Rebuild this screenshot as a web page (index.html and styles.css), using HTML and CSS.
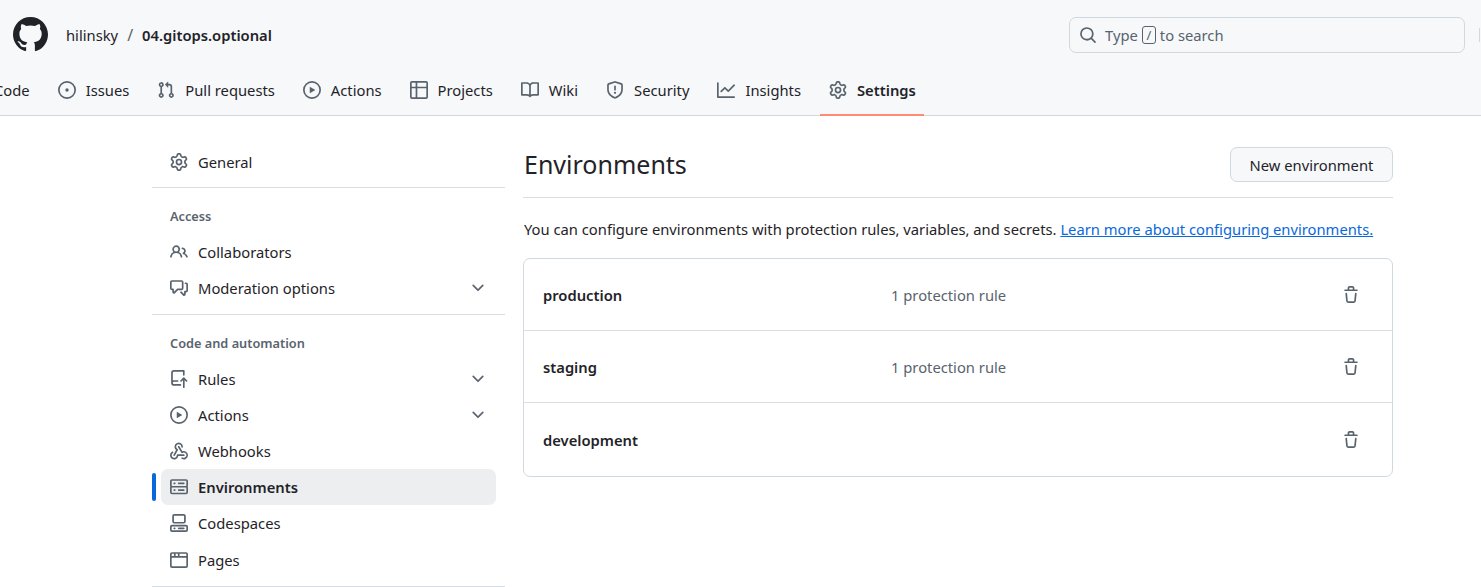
FILE: index.html
```html
<!DOCTYPE html>
<html lang="en">
<head>
  <meta charset="UTF-8">
  <meta name="viewport" content="width=device-width, initial-scale=1.0">
  <title>Environments</title>
  <link rel="stylesheet" href="styles.css">
</head>
<body>
  <svg class="sprite" aria-hidden="true">
    <symbol id="i-github" viewBox="0 0 16 16"><path d="M8 0c4.42 0 8 3.58 8 8a8.013 8.013 0 0 1-5.45 7.59c-.4.08-.55-.17-.55-.38 0-.27.01-1.13.01-2.2 0-.75-.25-1.23-.54-1.48 1.78-.2 3.65-.88 3.65-3.95 0-.88-.31-1.59-.82-2.15.08-.2.36-1.02-.08-2.12 0 0-.67-.22-2.2.82-.64-.18-1.32-.27-2-.27-.68 0-1.36.09-2 .27-1.53-1.03-2.2-.82-2.2-.82-.44 1.1-.16 1.92-.08 2.12-.51.56-.82 1.28-.82 2.15 0 3.06 1.86 3.75 3.64 3.95-.23.2-.44.55-.51 1.07-.46.21-1.61.55-2.33-.66-.15-.24-.6-.83-1.23-.82-.67.01-.27.38.01.53.34.19.73.9.82 1.13.16.45.68 1.31 2.69.94 0 .67.01 1.3.01 1.49 0 .21-.15.45-.55.38A7.995 7.995 0 0 1 0 8c0-4.42 3.58-8 8-8Z"/></symbol>
    <symbol id="i-issue" viewBox="0 0 16 16"><path d="M8 9.5a1.5 1.5 0 1 0 0-3 1.5 1.5 0 0 0 0 3Z"/><path d="M8 0a8 8 0 1 1 0 16A8 8 0 0 1 8 0ZM1.5 8a6.5 6.5 0 1 0 13 0 6.5 6.5 0 0 0-13 0Z"/></symbol>
    <symbol id="i-pull" viewBox="0 0 16 16"><path d="M1.5 3.25a2.25 2.25 0 1 1 3 2.122v5.256a2.251 2.251 0 1 1-1.5 0V5.372A2.25 2.25 0 0 1 1.5 3.25Zm5.677-.177L9.573.677A.25.25 0 0 1 10 .854V2.5h1A2.5 2.5 0 0 1 13.5 5v5.628a2.251 2.251 0 1 1-1.5 0V5a1 1 0 0 0-1-1h-1v1.646a.25.25 0 0 1-.427.177L7.177 3.427a.25.25 0 0 1 0-.354ZM3.75 2.5a.75.75 0 1 0 0 1.5.75.75 0 0 0 0-1.5Zm0 9.5a.75.75 0 1 0 0 1.5.75.75 0 0 0 0-1.5Zm8.25.75a.75.75 0 1 0 1.5 0 .75.75 0 0 0-1.5 0Z"/></symbol>
    <symbol id="i-play" viewBox="0 0 16 16"><path d="M8 0a8 8 0 1 1 0 16A8 8 0 0 1 8 0ZM1.5 8a6.5 6.5 0 1 0 13 0 6.5 6.5 0 0 0-13 0Zm4.879-2.773 4.264 2.559a.25.25 0 0 1 0 .428l-4.264 2.559A.25.25 0 0 1 6 10.559V5.442a.25.25 0 0 1 .379-.215Z"/></symbol>
    <symbol id="i-table" viewBox="0 0 16 16"><path d="M0 1.75C0 .784.784 0 1.75 0h12.5C15.216 0 16 .784 16 1.75v12.5A1.75 1.75 0 0 1 14.25 16H1.75A1.75 1.75 0 0 1 0 14.25ZM6.5 6.5v8h7.75a.25.25 0 0 0 .25-.25V6.5Zm8-1.5V1.75a.25.25 0 0 0-.25-.25H6.5V5Zm-13 1.5v7.75c0 .138.112.25.25.25H5v-8ZM5 5V1.5H1.75a.25.25 0 0 0-.25.25V5Z"/></symbol>
    <symbol id="i-book" viewBox="0 0 16 16"><path d="M0 1.75A.75.75 0 0 1 .75 1h4.253c1.227 0 2.317.59 3 1.501A3.743 3.743 0 0 1 11.006 1h4.245a.75.75 0 0 1 .75.75v10.5a.75.75 0 0 1-.75.75h-4.507a2.25 2.25 0 0 0-1.591.659l-.622.621a.75.75 0 0 1-1.06 0l-.622-.621A2.25 2.25 0 0 0 5.258 13H.75a.75.75 0 0 1-.75-.75Zm7.251 10.324.004-5.073-.002-2.253A2.25 2.25 0 0 0 5.003 2.5H1.5v9h3.757a3.75 3.75 0 0 1 1.994.574ZM8.755 4.75l-.004 7.322a3.752 3.752 0 0 1 1.992-.572H14.5v-9h-3.495a2.25 2.25 0 0 0-2.25 2.25Z"/></symbol>
    <symbol id="i-shield" viewBox="0 0 16 16"><path d="M7.467.133a1.748 1.748 0 0 1 1.066 0l5.25 1.68A1.75 1.75 0 0 1 15 3.48V7c0 1.566-.32 3.182-1.303 4.682-.983 1.498-2.585 2.813-5.032 3.855a1.697 1.697 0 0 1-1.33 0c-2.447-1.042-4.049-2.357-5.032-3.855C1.32 10.182 1 8.566 1 7V3.48a1.75 1.75 0 0 1 1.217-1.667Zm.61 1.429a.25.25 0 0 0-.153 0l-5.25 1.68a.25.25 0 0 0-.174.238V7c0 1.358.275 2.666 1.057 3.86.784 1.194 2.121 2.34 4.366 3.297a.196.196 0 0 0 .154 0c2.245-.956 3.582-2.104 4.366-3.298C13.225 9.666 13.5 8.36 13.5 7V3.48a.251.251 0 0 0-.174-.237l-5.25-1.68ZM8.75 4.75v3a.75.75 0 0 1-1.5 0v-3a.75.75 0 0 1 1.5 0ZM9 10.5a1 1 0 1 1-2 0 1 1 0 0 1 2 0Z"/></symbol>
    <symbol id="i-graph" viewBox="0 0 16 16"><path d="M1.5 1.75V13.5h13.75a.75.75 0 0 1 0 1.5H.75a.75.75 0 0 1-.75-.75V1.75a.75.75 0 0 1 1.5 0Zm14.28 2.53-5.25 5.25a.75.75 0 0 1-1.06 0L7 7.06 4.28 9.78a.751.751 0 0 1-1.042-.018.751.751 0 0 1-.018-1.042l3.25-3.25a.75.75 0 0 1 1.06 0L10 7.94l4.72-4.72a.751.751 0 0 1 1.042.018.751.751 0 0 1 .018 1.042Z"/></symbol>
    <symbol id="i-gear" viewBox="0 0 16 16"><path d="M8 0a8.2 8.2 0 0 1 .701.031C9.444.095 9.99.645 10.16 1.29l.288 1.107c.018.066.079.158.212.224.231.114.454.243.668.386.123.082.233.09.299.071l1.103-.303c.644-.176 1.392.021 1.82.63.27.385.506.792.704 1.218.315.675.111 1.422-.364 1.891l-.814.806c-.049.048-.098.147-.088.294.016.257.016.515 0 .772-.01.147.038.246.088.294l.814.806c.475.469.679 1.216.364 1.891a7.977 7.977 0 0 1-.704 1.217c-.428.61-1.176.807-1.82.63l-1.102-.302c-.067-.019-.177-.011-.3.071a5.909 5.909 0 0 1-.668.386c-.133.066-.194.158-.211.224l-.29 1.106c-.168.646-.715 1.196-1.458 1.26a8.006 8.006 0 0 1-1.402 0c-.743-.064-1.289-.614-1.458-1.26l-.289-1.106c-.018-.066-.079-.158-.212-.224a5.738 5.738 0 0 1-.668-.386c-.123-.082-.233-.09-.299-.071l-1.103.303c-.644.176-1.392-.021-1.82-.63a8.12 8.12 0 0 1-.704-1.218c-.315-.675-.111-1.422.363-1.891l.815-.806c.05-.048.098-.147.088-.294a6.214 6.214 0 0 1 0-.772c.01-.147-.038-.246-.088-.294l-.815-.806C.635 6.045.431 5.298.746 4.623a7.92 7.92 0 0 1 .704-1.217c.428-.61 1.176-.807 1.82-.63l1.102.302c.067.019.177.011.3-.071.214-.143.437-.272.668-.386.133-.066.194-.158.211-.224l.29-1.106C6.009.645 6.556.095 7.299.03 7.53.01 7.764 0 8 0Zm-.571 1.525c-.036.003-.108.036-.137.146l-.289 1.105c-.147.561-.549.967-.998 1.189-.173.086-.34.183-.5.29-.417.278-.97.423-1.529.27l-1.103-.303c-.109-.03-.175.016-.195.045-.22.312-.412.644-.573.99-.014.031-.021.11.059.19l.815.806c.411.406.562.957.53 1.456a4.709 4.709 0 0 0 0 .582c.032.499-.119 1.05-.53 1.456l-.815.806c-.081.08-.073.159-.059.19.162.346.353.677.573.989.02.03.085.076.195.046l1.102-.303c.56-.153 1.113-.008 1.53.27.161.107.328.204.501.29.447.222.85.629.997 1.189l.289 1.105c.029.109.101.143.137.146a6.6 6.6 0 0 0 1.142 0c.036-.003.108-.036.137-.146l.289-1.105c.147-.561.549-.967.998-1.189.173-.086.34-.183.5-.29.417-.278.97-.423 1.529-.27l1.103.303c.109.029.175-.016.195-.045.22-.313.411-.644.573-.99.014-.031.021-.11-.059-.19l-.815-.806c-.411-.406-.562-.957-.53-1.456a4.709 4.709 0 0 0 0-.582c-.032-.499.119-1.05.53-1.456l.815-.806c.081-.08.073-.159.059-.19a6.464 6.464 0 0 0-.573-.989c-.02-.03-.085-.076-.195-.046l-1.102.303c-.56.153-1.113.008-1.53-.27a4.44 4.44 0 0 0-.501-.29c-.447-.222-.85-.629-.997-1.189l-.289-1.105c-.029-.11-.101-.143-.137-.146a6.6 6.6 0 0 0-1.142 0ZM11 8a3 3 0 1 1-6 0 3 3 0 0 1 6 0ZM9.5 8a1.5 1.5 0 1 0-3.001.001A1.5 1.5 0 0 0 9.5 8Z"/></symbol>
    <symbol id="i-people" viewBox="0 0 16 16"><path d="M2 5.5a3.5 3.5 0 1 1 5.898 2.549 5.508 5.508 0 0 1 3.034 4.084.75.75 0 1 1-1.482.235 4 4 0 0 0-7.9 0 .75.75 0 0 1-1.482-.236A5.507 5.507 0 0 1 3.102 8.05 3.493 3.493 0 0 1 2 5.5ZM11 4a3.001 3.001 0 0 1 2.22 5.018 5.01 5.01 0 0 1 2.56 3.012.749.749 0 0 1-.885.954.752.752 0 0 1-.549-.514 3.507 3.507 0 0 0-2.522-2.372.75.75 0 0 1-.574-.73v-.352a.75.75 0 0 1 .416-.672A1.5 1.5 0 0 0 11 5.5.75.75 0 0 1 11 4Zm-5.5-.5a2 2 0 1 0-.001 3.999A2 2 0 0 0 5.5 3.5Z"/></symbol>
    <symbol id="i-comments" viewBox="0 0 16 16"><path d="M1.75 1h8.5c.966 0 1.75.784 1.75 1.75v5.5A1.75 1.75 0 0 1 10.25 10H7.061l-2.574 2.573A1.458 1.458 0 0 1 2 11.543V10h-.25A1.75 1.75 0 0 1 0 8.25v-5.5C0 1.784.784 1 1.75 1ZM1.5 2.75v5.5c0 .138.112.25.25.25h1a.75.75 0 0 1 .75.75v2.19l2.72-2.72a.749.749 0 0 1 .53-.22h3.5a.25.25 0 0 0 .25-.25v-5.5a.25.25 0 0 0-.25-.25h-8.5a.25.25 0 0 0-.25.25Zm13 2a.25.25 0 0 0-.25-.25h-.5a.75.75 0 0 1 0-1.5h.5c.966 0 1.75.784 1.75 1.75v5.5A1.75 1.75 0 0 1 14.25 12H14v1.543a1.458 1.458 0 0 1-2.487 1.03L9.22 12.28a.749.749 0 0 1 .326-1.275.749.749 0 0 1 .734.215l2.22 2.22v-2.19a.75.75 0 0 1 .75-.75h1a.25.25 0 0 0 .25-.25Z"/></symbol>
    <symbol id="i-rules" viewBox="0 0 16 16"><path d="M1 2.5A2.5 2.5 0 0 1 3.5 0h8.75a.75.75 0 0 1 .75.75v3.5a.75.75 0 0 1-1.5 0V1.5h-8a1 1 0 0 0-1 1v6.708A2.493 2.493 0 0 1 3.5 9h3.25a.75.75 0 0 1 0 1.5H3.5a1 1 0 0 0 0 2h5.75a.75.75 0 0 1 0 1.5H3.5A2.5 2.5 0 0 1 1 11.5Zm13.23 7.79h-.001l-1.224-1.224v6.184a.75.75 0 0 1-1.5 0V9.066L10.28 10.29a.75.75 0 0 1-1.06-1.06l2.505-2.504a.75.75 0 0 1 1.06 0L15.29 9.23a.751.751 0 0 1-.018 1.042.751.751 0 0 1-1.042.018Z"/></symbol>
    <symbol id="i-webhook" viewBox="0 0 16 16"><path d="M5.5 4.25a2.25 2.25 0 0 1 4.5 0 .75.75 0 0 0 1.5 0 3.75 3.75 0 1 0-6.14 2.889l-2.272 4.258a.75.75 0 0 0 1.324.706L7 7.25a.75.75 0 0 0-.309-1.015A2.25 2.25 0 0 1 5.5 4.25Z"/><path d="M7.364 3.607a.75.75 0 0 1 1.03.257l2.608 4.349a3.75 3.75 0 1 1-.628 6.785.75.75 0 0 1 .752-1.299 2.25 2.25 0 1 0-.033-3.88.75.75 0 0 1-1.03-.256L7.107 4.636a.75.75 0 0 1 .257-1.03Z"/><path d="M2.9 8.776A.75.75 0 0 1 2.625 9.8 2.25 2.25 0 1 0 6 11.75a.75.75 0 0 1 .75-.751h5.5a.75.75 0 0 1 0 1.5H7.425a3.751 3.751 0 1 1-5.55-3.998.75.75 0 0 1 1.024.274Z"/></symbol>
    <symbol id="i-server" viewBox="0 0 16 16"><path d="M1.75 1h12.5c.966 0 1.75.784 1.75 1.75v4c0 .372-.116.717-.314 1 .198.283.314.628.314 1v4a1.75 1.75 0 0 1-1.75 1.75H1.75A1.75 1.75 0 0 1 0 12.75v-4c0-.358.109-.707.314-1a1.739 1.739 0 0 1-.314-1v-4C0 1.784.784 1 1.75 1ZM1.5 2.75v4c0 .138.112.25.25.25h12.5a.25.25 0 0 0 .25-.25v-4a.25.25 0 0 0-.25-.25H1.75a.25.25 0 0 0-.25.25Zm.25 5.75a.25.25 0 0 0-.25.25v4c0 .138.112.25.25.25h12.5a.25.25 0 0 0 .25-.25v-4a.25.25 0 0 0-.25-.25ZM7 4.75A.75.75 0 0 1 7.75 4h4.5a.75.75 0 0 1 0 1.5h-4.5A.75.75 0 0 1 7 4.75ZM7.75 10h4.5a.75.75 0 0 1 0 1.5h-4.5a.75.75 0 0 1 0-1.5ZM3 4.75A.75.75 0 0 1 3.75 4h.5a.75.75 0 0 1 0 1.5h-.5A.75.75 0 0 1 3 4.75ZM3.75 10h.5a.75.75 0 0 1 0 1.5h-.5a.75.75 0 0 1 0-1.5Z"/></symbol>
    <symbol id="i-codespaces" viewBox="0 0 16 16"><path d="M0 11.25c0-.966.784-1.75 1.75-1.75h12.5c.966 0 1.75.784 1.75 1.75v3A1.75 1.75 0 0 1 14.25 16H1.75A1.75 1.75 0 0 1 0 14.25Zm2-9.5C2 .784 2.784 0 3.75 0h8.5C13.216 0 14 .784 14 1.75v5a1.75 1.75 0 0 1-1.75 1.75h-8.5A1.75 1.75 0 0 1 2 6.75Zm1.75-.25a.25.25 0 0 0-.25.25v5c0 .138.112.25.25.25h8.5a.25.25 0 0 0 .25-.25v-5a.25.25 0 0 0-.25-.25Zm-2 9.5a.25.25 0 0 0-.25.25v3c0 .138.112.25.25.25h12.5a.25.25 0 0 0 .25-.25v-3a.25.25 0 0 0-.25-.25Z"/><path d="M7 12.75a.75.75 0 0 1 .75-.75h4.5a.75.75 0 0 1 0 1.5h-4.5a.75.75 0 0 1-.75-.75Zm-4 0a.75.75 0 0 1 .75-.75h.5a.75.75 0 0 1 0 1.5h-.5a.75.75 0 0 1-.75-.75Z"/></symbol>
    <symbol id="i-browser" viewBox="0 0 16 16"><path d="M0 2.75C0 1.784.784 1 1.75 1h12.5c.966 0 1.75.784 1.75 1.75v10.5A1.75 1.75 0 0 1 14.25 15H1.75A1.75 1.75 0 0 1 0 13.25ZM14.5 6h-13v7.25c0 .138.112.25.25.25h12.5a.25.25 0 0 0 .25-.25Zm-6-3.5v2h6V2.75a.25.25 0 0 0-.25-.25ZM5 2.5v2h2v-2Zm-3.25 0a.25.25 0 0 0-.25.25V4.5h2v-2Z"/></symbol>
    <symbol id="i-search" viewBox="0 0 16 16"><path d="M10.68 11.74a6 6 0 0 1-7.922-8.982 6 6 0 0 1 8.982 7.922l3.04 3.04a.749.749 0 0 1-.326 1.275.749.749 0 0 1-.734-.215ZM11.5 7a4.499 4.499 0 1 0-8.997 0A4.499 4.499 0 0 0 11.5 7Z"/></symbol>
    <symbol id="i-chevron" viewBox="0 0 16 16"><path d="M12.78 5.22a.749.749 0 0 1 0 1.06l-4.25 4.25a.749.749 0 0 1-1.06 0L3.22 6.28a.749.749 0 1 1 1.06-1.06L8 8.939l3.72-3.719a.749.749 0 0 1 1.06 0Z"/></symbol>
    <symbol id="i-trash" viewBox="0 0 16 16"><path d="M11 1.75V3h2.25a.75.75 0 0 1 0 1.5H2.75a.75.75 0 0 1 0-1.5H5V1.75C5 .784 5.784 0 6.75 0h2.5C10.216 0 11 .784 11 1.75ZM4.496 6.675l.66 6.6a.25.25 0 0 0 .249.225h5.19a.25.25 0 0 0 .249-.225l.66-6.6a.75.75 0 0 1 1.492.149l-.66 6.6A1.748 1.748 0 0 1 10.595 15h-5.19a1.75 1.75 0 0 1-1.741-1.575l-.66-6.6a.75.75 0 1 1 1.492-.15ZM6.5 1.75V3h3V1.75a.25.25 0 0 0-.25-.25h-2.5a.25.25 0 0 0-.25.25Z"/></symbol>
  </svg>

  <header class="app-header">
    <div class="top-bar">
      <svg class="logo"><use href="#i-github"/></svg>
      <div class="breadcrumb">
        <a class="owner">hilinsky</a>
        <span class="slash">/</span>
        <a class="repo">04.gitops.optional</a>
      </div>
      <div class="search-box">
        <svg class="icon"><use href="#i-search"/></svg>
        <span>Type</span>
        <kbd class="slash-key">/</kbd>
        <span>to search</span>
      </div>
      <span class="top-divider"></span>
    </div>
    <nav class="repo-nav">
      <a class="tab tab-code">Code</a>
      <a class="tab"><svg class="icon"><use href="#i-issue"/></svg>Issues</a>
      <a class="tab"><svg class="icon"><use href="#i-pull"/></svg>Pull requests</a>
      <a class="tab"><svg class="icon"><use href="#i-play"/></svg>Actions</a>
      <a class="tab"><svg class="icon"><use href="#i-table"/></svg>Projects</a>
      <a class="tab"><svg class="icon"><use href="#i-book"/></svg>Wiki</a>
      <a class="tab"><svg class="icon"><use href="#i-shield"/></svg>Security</a>
      <a class="tab"><svg class="icon"><use href="#i-graph"/></svg>Insights</a>
      <a class="tab tab-selected"><svg class="icon"><use href="#i-gear"/></svg>Settings</a>
    </nav>
  </header>

  <div class="page">
    <aside class="sidebar">
      <a class="side-item"><svg class="icon"><use href="#i-gear"/></svg>General</a>
      <hr class="side-rule">
      <h3 class="side-heading">Access</h3>
      <a class="side-item"><svg class="icon"><use href="#i-people"/></svg>Collaborators</a>
      <a class="side-item"><svg class="icon"><use href="#i-comments"/></svg>Moderation options<svg class="icon chevron"><use href="#i-chevron"/></svg></a>
      <hr class="side-rule">
      <h3 class="side-heading">Code and automation</h3>
      <a class="side-item"><svg class="icon"><use href="#i-rules"/></svg>Rules<svg class="icon chevron"><use href="#i-chevron"/></svg></a>
      <a class="side-item"><svg class="icon"><use href="#i-play"/></svg>Actions<svg class="icon chevron"><use href="#i-chevron"/></svg></a>
      <a class="side-item"><svg class="icon"><use href="#i-webhook"/></svg>Webhooks</a>
      <a class="side-item side-active"><svg class="icon"><use href="#i-server"/></svg>Environments</a>
      <a class="side-item"><svg class="icon"><use href="#i-codespaces"/></svg>Codespaces</a>
      <a class="side-item"><svg class="icon"><use href="#i-browser"/></svg>Pages</a>
      <hr class="side-rule side-rule-last">
    </aside>

    <main class="content">
      <div class="title-row">
        <h1>Environments</h1>
        <button class="btn">New environment</button>
      </div>
      <p class="intro">You can configure environments with protection rules, variables, and secrets. <a href="#">Learn more about configuring environments.</a></p>
      <div class="env-list">
        <div class="env-row">
          <span class="env-name">production</span>
          <span class="env-rules">1 protection rule</span>
          <svg class="icon trash"><use href="#i-trash"/></svg>
        </div>
        <div class="env-row">
          <span class="env-name">staging</span>
          <span class="env-rules">1 protection rule</span>
          <svg class="icon trash"><use href="#i-trash"/></svg>
        </div>
        <div class="env-row">
          <span class="env-name">development</span>
          <span class="env-rules"></span>
          <svg class="icon trash"><use href="#i-trash"/></svg>
        </div>
      </div>
    </main>
  </div>
</body>
</html>
```

FILE: styles.css
```css
html, body {
  height: 587px;
  overflow: hidden;
}

body {
  margin: 0;
  font-family: "Noto Sans", Arial, sans-serif;
  font-size: 14.75px;
  color: #1f2328;
  background-color: #fff;
}

.sprite {
  display: none;
}

.icon {
  width: 18px;
  height: 18px;
  fill: #59636e;
  flex-shrink: 0;
}

.app-header {
  height: 115px;
  background-color: #f6f8fa;
  border-bottom: 1px solid #d1d9e0;
}

.top-bar {
  display: flex;
  align-items: center;
  height: 69px;
  padding-left: 13px;
}

.logo {
  width: 35px;
  height: 35px;
  fill: #1f2328;
}

.breadcrumb {
  display: flex;
  align-items: center;
  margin-left: 18px;
  gap: 9px;
}

.slash {
  color: #59636e;
  font-size: 16px;
}

.repo {
  font-weight: 600;
}

.search-box {
  display: flex;
  align-items: center;
  gap: 4px;
  width: 396px;
  height: 36px;
  box-sizing: border-box;
  margin-left: auto;
  padding-left: 9px;
  border: 1px solid #d1d9e0;
  border-radius: 7px;
  color: #59636e;
}

.search-box .icon {
  margin-right: 4px;
}

.slash-key {
  display: inline-block;
  box-sizing: border-box;
  width: 14px;
  height: 18px;
  border: 1px solid #59636e;
  border-radius: 3px;
  font-family: inherit;
  font-size: 13px;
  line-height: 16px;
  text-align: center;
}

.top-divider {
  width: 1px;
  height: 14px;
  margin-left: 14px;
  background-color: #d1d9e0;
  margin-right: 1px;
}

.repo-nav {
  display: flex;
  height: 47px;
  margin-left: -15px;
}

.tab {
  display: flex;
  align-items: center;
  gap: 10px;
  box-sizing: border-box;
  height: 47px;
  padding: 0 9px 3px;
  margin-right: 10px;
  border-bottom: 2px solid transparent;
  white-space: nowrap;
}

.tab-selected {
  padding-right: 8px;
  font-weight: 600;
  border-bottom-color: #fd8c73;
}

.page {
  display: flex;
  padding: 28px 88px 0 152px;
}

.sidebar {
  width: 353px;
  flex-shrink: 0;
}

.side-item {
  position: relative;
  display: flex;
  align-items: center;
  gap: 10px;
  height: 36.2px;
  margin: 0 9px;
  padding: 0 9px;
  border-radius: 7px;
}

.chevron {
  margin-left: auto;
}

.side-active {
  font-weight: 600;
  background-color: #eceef0;
}

.side-active:after {
  content: '';
  position: absolute;
  left: -9px;
  top: 4px;
  bottom: 4px;
  width: 4px;
  border-radius: 3px;
  background-color: #0969da;
}

.side-rule {
  height: 1px;
  margin: 7px 0 0;
  border: 0;
  background-color: #d8dee4;
}

.side-rule-last {
  margin-top: 8px;
}

.side-heading {
  margin: 0;
  padding: 19px 18px 9px;
  font-size: 12.75px;
  line-height: 18px;
  font-weight: 600;
  color: #59636e;
}

.content {
  flex: 1;
  margin-left: 18px;
}

.title-row {
  display: flex;
  align-items: center;
  justify-content: space-between;
  height: 52px;
  padding-bottom: 14px;
  box-sizing: border-box;
  margin-top: 2px;
  border-bottom: 1px solid #d8dee4;
}

.title-row h1 {
  margin: 0 0 2px 1px;
  font-size: 25px;
  font-weight: 400;
}

.btn {
  width: 163px;
  height: 35px;
  border: 1px solid #d1d9e0;
  border-radius: 7px;
  background-color: #f6f8fa;
  color: #1f2328;
  font-family: inherit;
  font-size: 14.75px;
}

.intro {
  margin: 20px 0 18px 1px;
  line-height: 22px;
  white-space: nowrap;
}

.intro a {
  color: #0969da;
}

.env-list {
  border: 1px solid #d1d9e0;
  border-radius: 7px;
}

.env-row {
  display: flex;
  align-items: center;
  height: 70px;
  padding: 1px 32px 0 19px;
  border-bottom: 1px solid #d8dee4;
}

.env-row:last-child {
  height: 72px;
  border-bottom: 0;
}

.env-name {
  width: 348px;
  font-weight: 600;
}

.env-rules {
  flex: 1;
  color: #59636e;
}
```
